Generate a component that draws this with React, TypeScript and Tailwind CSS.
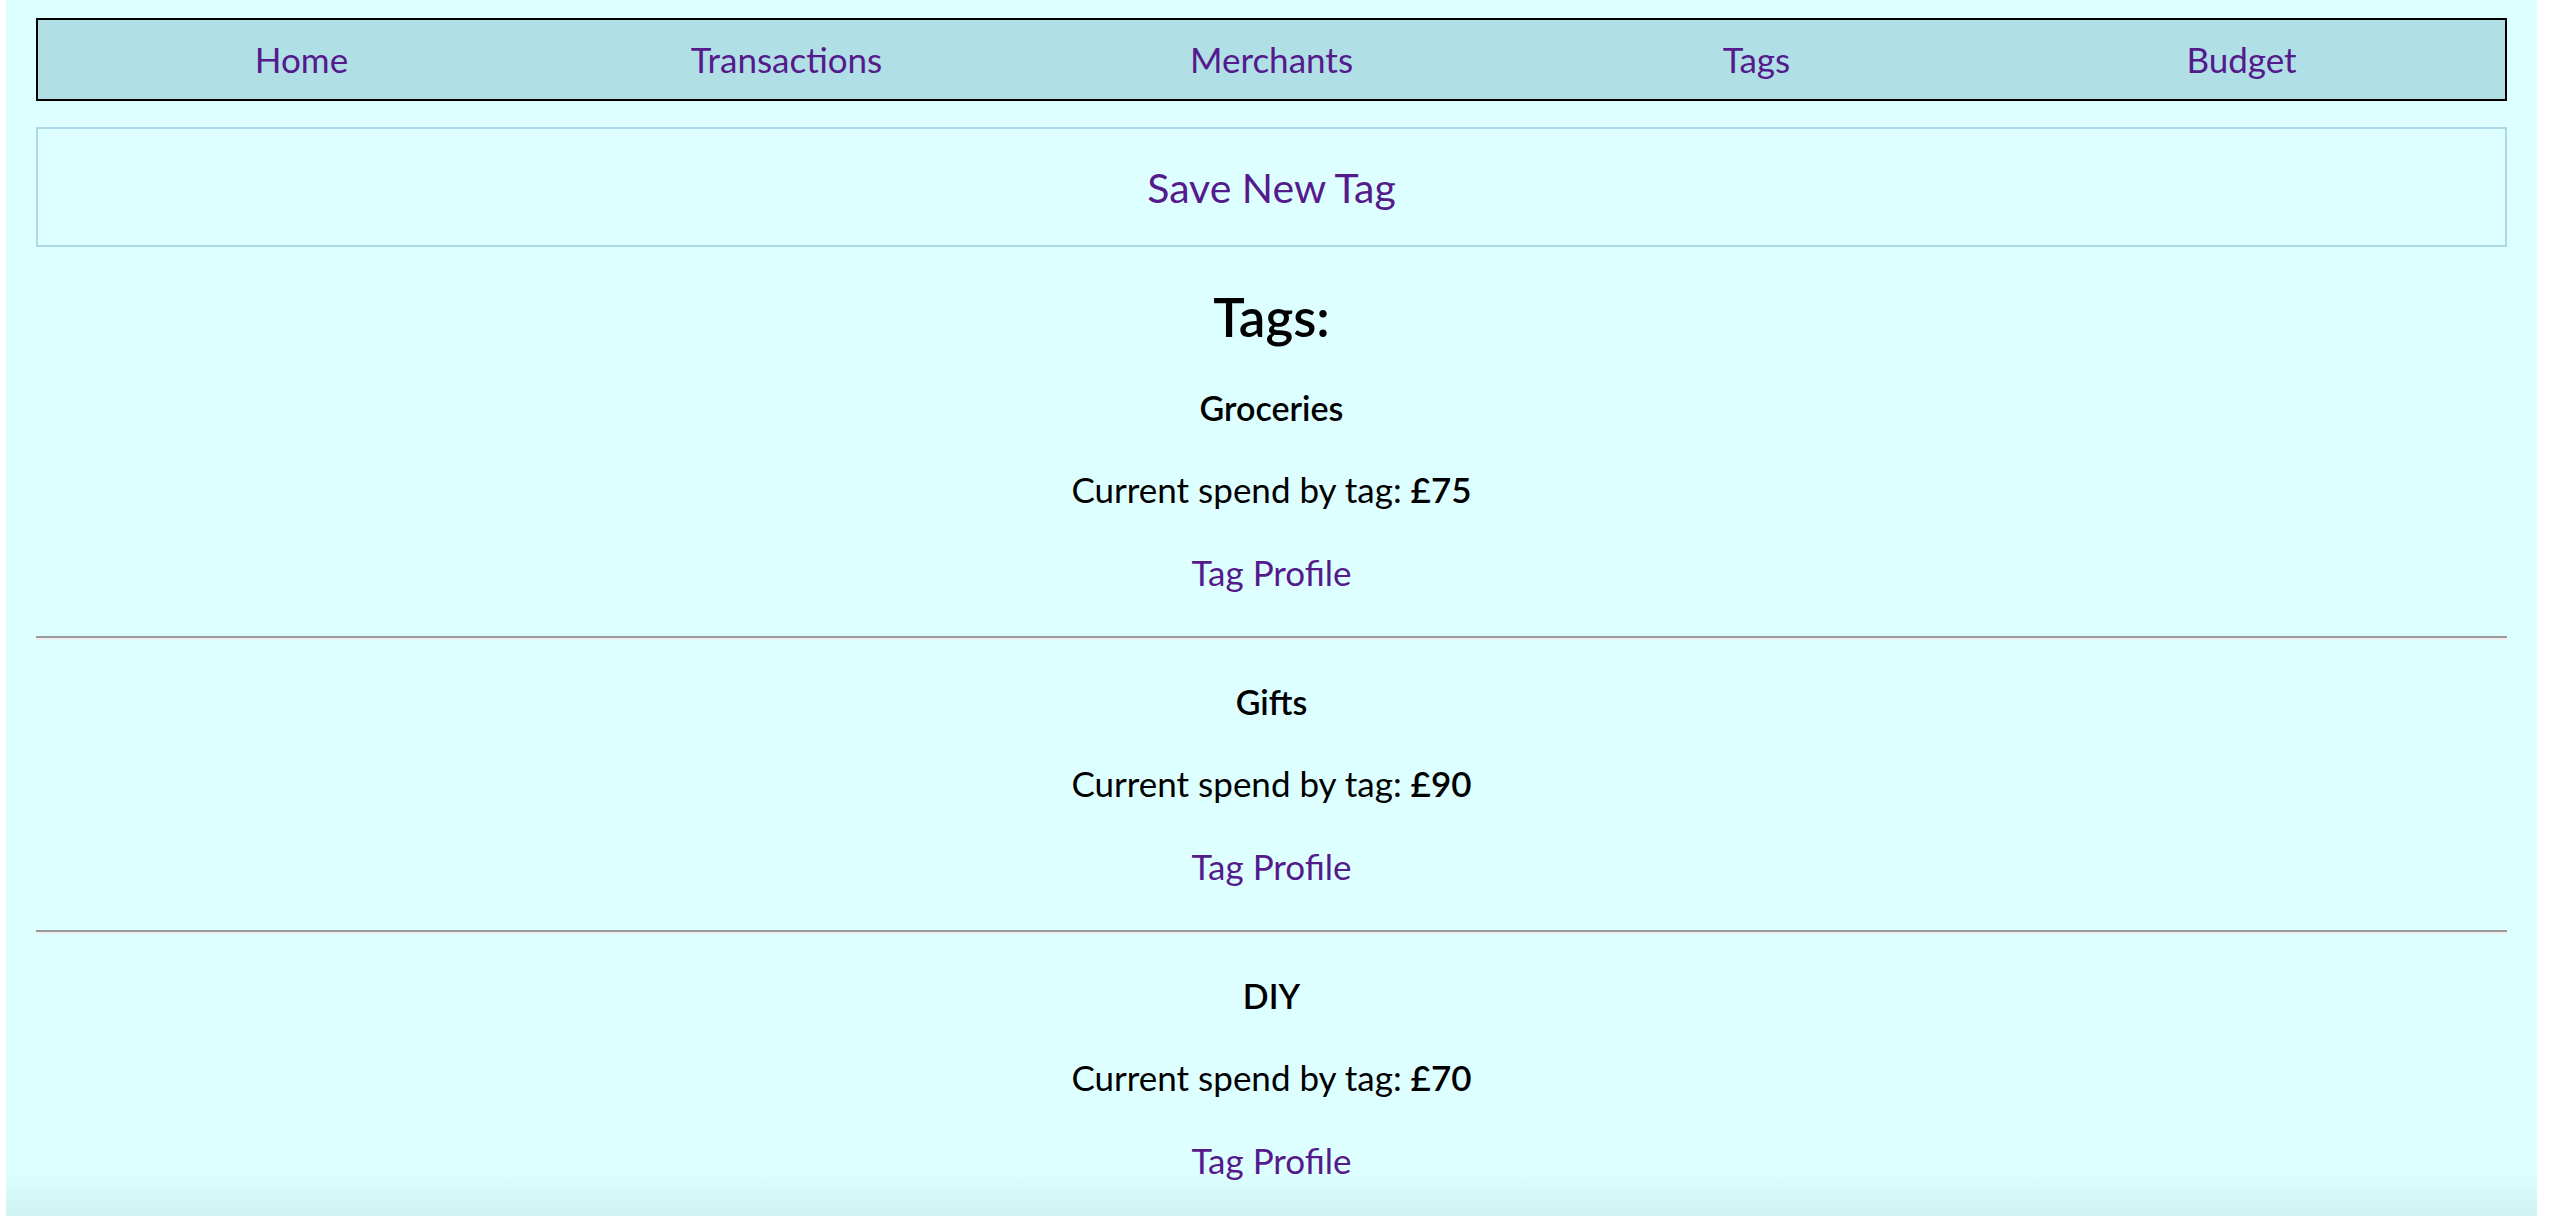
import React from "react";

const tags = [
  { name: "Groceries", spend: "£75" },
  { name: "Gifts", spend: "£90" },
  { name: "DIY", spend: "£70" },
];

const navItems = ["Home", "Transactions", "Merchants", "Tags", "Budget"];

export default function App() {
  return (
    <div className="w-[2550px] h-[1216px] bg-white overflow-hidden" style={{ fontFamily: "Lato, 'Noto Sans', sans-serif" }}>
      <div className="ml-[6px] w-[2531px] h-[1216px] bg-[linear-gradient(to_bottom,#DDFFFF_calc(100%-45px),#D0F2F2)] px-[30px] pt-[18px]">
        <nav className="h-[83px] border-2 border-black bg-[#B0E0E6] grid grid-cols-5 items-center px-[21px]">
          {navItems.map((n) => (
            <div key={n} className="text-center text-[35px] text-[#551A8B] leading-none">
              {n}
            </div>
          ))}
        </nav>
        <div className="mt-[26px] h-[120px] border-2 border-[#ADD8E6] flex items-center justify-center">
          <span className="text-[41px] text-[#551A8B] leading-none">Save New Tag</span>
        </div>
        <h2 className="mt-[41px] h-[58px] leading-[58px] text-center text-[53px] font-semibold text-black">Tags:</h2>
        <div className="mt-[38px]">
          {tags.map((t, i) => (
            <div key={t.name}>
              {i > 0 && <div className="h-[38px]" />}
              <div className="h-[48px] leading-[48px] text-center text-[34px] font-semibold text-black">{t.name}</div>
              <div className="mt-[33px] h-[48px] leading-[48px] text-center text-[35px] text-black">
                Current spend by tag: <span className="font-semibold">{t.spend}</span>
              </div>
              <div className="mt-[35px] h-[48px] leading-[48px] text-center text-[35px] text-[#551A8B]">Tag Profile</div>
              {i < tags.length - 1 && (
                <div className="mt-[40px] h-[4px] border-t-2 border-t-[#9A9A9A] border-b-2 border-b-[#EEEEEE]" />
              )}
            </div>
          ))}
        </div>
      </div>
    </div>
  );
}
